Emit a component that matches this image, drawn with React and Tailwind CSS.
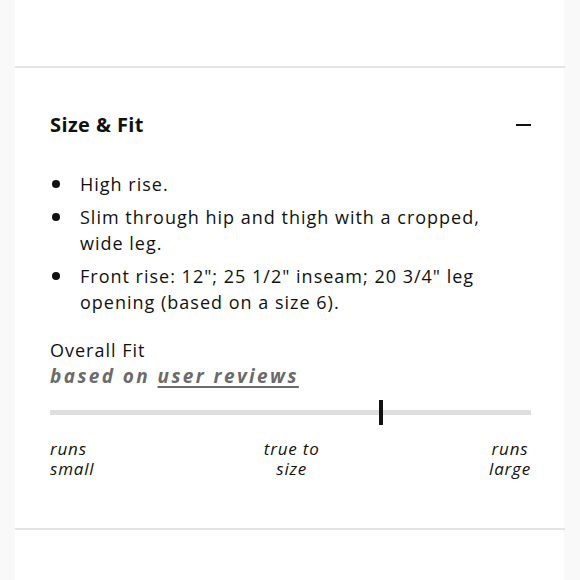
export default function App() {
  const fit = 68.5; // marker position along the track, percent

  return (
    <div className="w-[580px] h-[580px] overflow-hidden bg-[#f9f9fa] font-['Open_Sans',sans-serif] text-[#111]">
      <div className="ml-[15px] w-[549px] h-full bg-white">
        <div className="h-[66px]" />
        <div className="mr-[-1px] h-[2px] bg-[#e4e4e4]" />

        {/* Size & Fit accordion */}
        <section className="pl-[35px] pr-[33px]">
          <header className="mt-[43px] flex h-[28px] items-center justify-between">
            <h2 className="text-[20px] font-bold tracking-[0.4px]">Size &amp; Fit</h2>
            <span className="block h-[2px] w-[15px] bg-[#111]" />
          </header>

          <ul className="mt-[32px] flex flex-col gap-[7px] text-[18px] leading-[26px] tracking-[1px]">
            <li className="flex">
              <span className="mt-[9px] ml-[2px] h-[8px] w-[8px] shrink-0 rounded-full bg-[#111]" />
              <span className="ml-[20px] w-[412px]">High rise.</span>
            </li>
            <li className="flex">
              <span className="mt-[9px] ml-[2px] h-[8px] w-[8px] shrink-0 rounded-full bg-[#111]" />
              <span className="ml-[20px] w-[412px]">Slim through hip and thigh with a cropped, wide leg.</span>
            </li>
            <li className="flex">
              <span className="mt-[9px] ml-[2px] h-[8px] w-[8px] shrink-0 rounded-full bg-[#111]" />
              <span className="ml-[20px] w-[412px]">
                Front rise: 12"; 25 1/2" inseam; 20 3/4" leg opening (based on a size 6).
              </span>
            </li>
          </ul>

          <div className="mt-[22px] text-[18px] leading-[26px] tracking-[1px]">Overall Fit</div>
          <div className="text-[19px] leading-[26px] font-bold italic tracking-[2.4px] text-[#6b6b6b]">
            based on <span className="underline underline-offset-[3px] decoration-[1.5px]">user reviews</span>
          </div>

          <div className="relative mt-[11px] h-[25px]">
            <div className="absolute left-0 right-0 top-[10px] h-[5px] bg-[#dedede]" />
            <div className="absolute top-0 h-[25px] w-[4px] bg-[#111]" style={{ left: `${fit}%` }} />
          </div>

          <div className="mt-[14px] flex justify-between text-[17px] leading-[20px] italic tracking-[0.8px]">
            <div className="text-left">runs<br />small</div>
            <div className="text-center">true to<br />size</div>
            <div className="text-center">runs<br />large</div>
          </div>
        </section>

        <div className="mt-[49px] mr-[-1px] h-[2px] bg-[#e4e4e4]" />

        <section className="pl-[35px] pr-[33px]">
          <h2 className="mt-[47px] text-[20px] font-bold leading-[28px]">Details &amp; Care</h2>
        </section>
      </div>
    </div>
  );
}
